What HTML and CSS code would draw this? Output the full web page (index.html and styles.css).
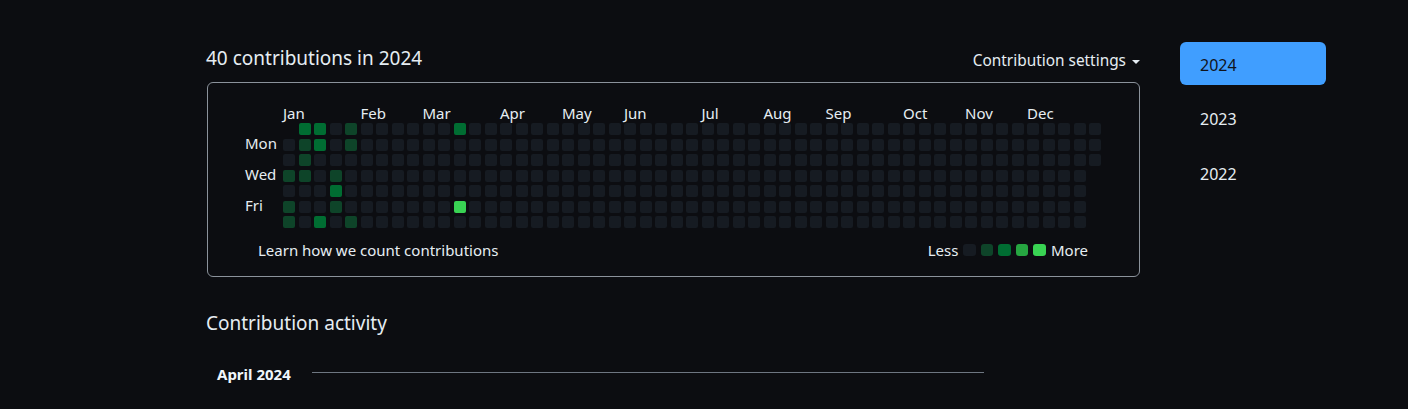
FILE: index.html
```html
<!DOCTYPE html>
<html lang="en">
<head>
<meta charset="utf-8">
<title>Contributions</title>
<link rel="stylesheet" href="styles.css">
</head>
<body>
<div class="page">
  <main class="main">
    <div class="header">
      <h2 class="title">40 contributions in 2024</h2>
      <button class="settings">Contribution settings<span class="caret"></span></button>
    </div>
    <div class="box">
      <div class="graph">
        <div class="months">
          <span style="grid-column:1 / span 4">Jan</span>
          <span style="grid-column:6 / span 4">Feb</span>
          <span style="grid-column:10 / span 4">Mar</span>
          <span style="grid-column:15 / span 4">Apr</span>
          <span style="grid-column:19 / span 4">May</span>
          <span style="grid-column:23 / span 4">Jun</span>
          <span style="grid-column:28 / span 4">Jul</span>
          <span style="grid-column:32 / span 4">Aug</span>
          <span style="grid-column:36 / span 4">Sep</span>
          <span style="grid-column:41 / span 4">Oct</span>
          <span style="grid-column:45 / span 4">Nov</span>
          <span style="grid-column:49 / span 4">Dec</span>
        </div>
        <div class="grid-body">
          <div class="days">
            <span></span><span>Mon</span><span></span><span>Wed</span><span></span><span>Fri</span><span></span>
          </div>
          <div class="cells" id="cells"></div>
        </div>
        <div class="footer">
          <a class="learn">Learn how we count contributions</a>
          <div class="legend">
            <span class="legend-text">Less</span>
            <i class="cell l0"></i><i class="cell l1"></i><i class="cell l2"></i><i class="cell l3"></i><i class="cell l4"></i>
            <span class="legend-text">More</span>
          </div>
        </div>
      </div>
    </div>
    <h2 class="activity-title">Contribution activity</h2>
    <div class="month-row">
      <h3 class="month-name">April 2024</h3>
      <div class="month-line"></div>
    </div>
  </main>
  <nav class="side">
    <a class="year active">2024</a>
    <a class="year">2023</a>
    <a class="year">2022</a>
  </nav>
</div>
<script src="script.js"></script>
</body>
</html>
```

FILE: styles.css
```css
* { box-sizing: border-box; }
html, body { margin: 0; padding: 0; }
body {
  background: #0c0d11;
  color: #e6edf3;
  font-family: "Noto Sans", "Open Sans", sans-serif;
  height: 409px;
  overflow: hidden;
}
.page {
  display: flex;
  padding: 42px 0 0 207px;
}
.main {
  width: 933px;
  flex: none;
}
.header {
  display: flex;
  justify-content: space-between;
  align-items: flex-end;
  height: 28px;
  margin: 2px 0 10px;
}
.title {
  margin: 0 0 0 -1px;
  font-size: 19px;
  font-weight: 400;
  line-height: 28px;
  color: #e6edf3;
}
.settings {
  display: flex;
  align-items: center;
  background: none;
  border: 0;
  padding: 0;
  margin-bottom: 1px;
  font-family: inherit;
  font-size: 15.4px;
  line-height: 20px;
  color: #e6edf3;
}
.caret {
  width: 0;
  height: 0;
  margin-left: 6px;
  border-left: 4.5px solid transparent;
  border-right: 4.5px solid transparent;
  border-top: 4.5px solid #e6edf3;
  margin-top: 1px;
}
.box {
  border: 1px solid #8b929b;
  border-radius: 6px;
  padding: 21px 0 16px 37px;
}
.graph {
  width: 856px;
}
.months {
  display: grid;
  grid-template-columns: repeat(53, 12px);
  column-gap: 3.5px;
  margin-left: 38px;
  height: 19px;
  font-size: 15px;
  line-height: 18px;
  white-space: nowrap;
}
.grid-body {
  display: flex;
}
.days {
  width: 38px;
  display: grid;
  grid-template-rows: repeat(7, 12px);
  row-gap: 3.5px;
  font-size: 15px;
  line-height: 9px;
}
.cells {
  display: grid;
  grid-template-rows: repeat(7, 12px);
  grid-auto-flow: column;
  grid-auto-columns: 12px;
  gap: 3.5px;
}
.cell {
  display: block;
  width: 12px;
  height: 12px;
  border-radius: 2px;
  background: #161b22;
}
.cell.blank { visibility: hidden; }
.l0 { background: #161b22; }
.l1 { background: #0e4429; }
.l2 { background: #006d32; }
.l3 { background: #26a641; }
.l4 { background: #39d353; }
.footer {
  display: flex;
  justify-content: space-between;
  align-items: center;
  height: 20px;
  margin-top: 12px;
  padding: 0 13px;
  font-size: 15px;
}
.learn { color: #e6edf3; }
.legend {
  display: flex;
  align-items: center;
  gap: 5px;
}
.legend .cell {
  width: 12.5px;
  height: 12.5px;
  border-radius: 3px;
}
.legend-text { line-height: 20px; }
.activity-title {
  margin: 33px 0 0 -1px;
  font-size: 19px;
  font-weight: 400;
  line-height: 26px;
}
.month-row {
  display: flex;
  align-items: center;
  width: 777px;
  margin-top: 28px;
  padding-left: 10px;
}
.month-name {
  margin: 0;
  font-size: 15px;
  font-weight: 700;
  line-height: 20px;
  color: #f0f6fc;
}
.month-line {
  flex: 1;
  height: 1px;
  background: #6e7681;
  margin-left: 21px;
  margin-top: -3px;
}
.side {
  width: 146px;
  margin-left: 40px;
  display: flex;
  flex-direction: column;
  gap: 11.3px;
}
.year {
  display: block;
  height: 43px;
  padding: 4px 0 0 20px;
  line-height: 39px;
  font-size: 16px;
  border-radius: 6px;
  color: #e6edf3;
}
.year.active {
  background: #409eff;
  color: #10131a;
}
```

FILE: script.js
```js
(function () {
  var levels = {
    "1,0": 2, "2,0": 2, "4,0": 1, "11,0": 2,
    "1,1": 1, "2,1": 2, "4,1": 1,
    "1,2": 1,
    "0,3": 1, "1,3": 1, "3,3": 1,
    "3,4": 2,
    "0,5": 1, "3,5": 1, "11,5": 4,
    "0,6": 1, "2,6": 2, "4,6": 1
  };
  var cells = document.getElementById("cells");
  var html = "";
  for (var k = 0; k < 367; k++) {
    var col = Math.floor(k / 7), row = k % 7;
    if (k === 0) { html += '<i class="cell blank"></i>'; continue; }
    var lv = levels[col + "," + row] || 0;
    html += '<i class="cell l' + lv + '"></i>';
  }
  cells.innerHTML = html;
})();
```
